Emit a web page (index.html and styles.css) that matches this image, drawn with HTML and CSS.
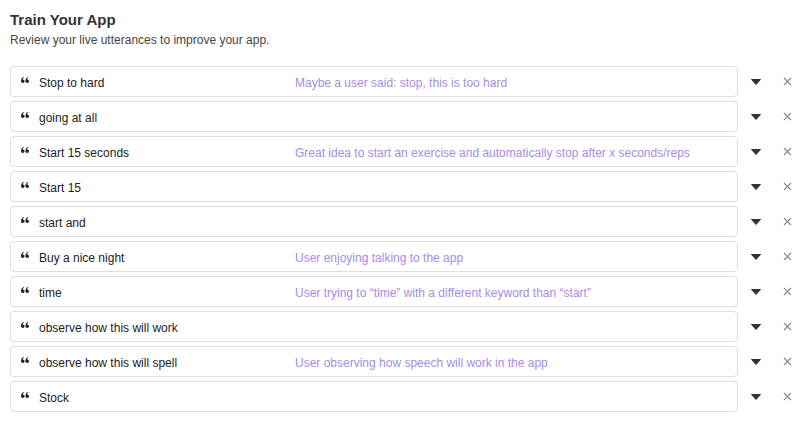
FILE: index.html
```html
<!DOCTYPE html>
<html lang="en">
  <head>
    <meta charset="UTF-8" />
    <title>Train Your App</title>
    <link rel="stylesheet" href="styles.css">
  </head>
  <body>
    <div class="container">
      <h1>Train Your App</h1>
      <p class="subtitle">Review your live utterances to improve your app.</p>
      <div class="list" id="list"></div>
    </div>

    <script>
      const items = [
        ["Stop to hard", "Maybe a user said: stop, this is too hard"],
        ["going at all", ""],
        ["Start 15 seconds", "Great idea to start an exercise and automatically stop after x seconds/reps"],
        ["Start 15", ""],
        ["start and", ""],
        ["Buy a nice night", "User enjoying talking to the app"],
        ["time", "User trying to \u201ctime\u201d with a different keyword than \u201cstart\u201d"],
        ["observe how this will work", ""],
        ["observe how this will spell", "User observing how speech will work in the app"],
        ["Stock", ""]
      ];

      // quote-left glyph: two filled "6" shapes
      const quote = `<svg width="8" height="6" viewBox="0 0 8 6">
        <path d="M0 4.2a1.8 1.8 0 1 0 1.8-1.8c0-1 .5-1.6 1.3-1.9L2.9 0C1 .5 0 2 0 4.2z" fill="#222"/>
        <path d="M4.4 4.2a1.8 1.8 0 1 0 1.8-1.8c0-1 .5-1.6 1.3-1.9L7.3 0C5.4 .5 4.4 2 4.4 4.2z" fill="#222"/>
      </svg>`;

      const list = document.getElementById("list");
      items.forEach(([text, note]) => {
        const row = document.createElement("div");
        row.className = "row";
        row.innerHTML = `
          <div class="utterance">
            <span class="quote">${quote}</span>
            <span class="text">${text}</span>
            <span class="note">${note}</span>
          </div>
          <span class="caret"><svg width="10" height="6" viewBox="0 0 10 6"><path d="M0.5 0.5h9L5 5.5z" fill="#333" stroke="#333" stroke-linejoin="round"/></svg></span>
          <span class="close"><svg width="9" height="9" viewBox="0 0 9 9"><path d="M1 1l7 7M8 1L1 8" stroke="#888" stroke-width="1.1"/></svg></span>
        `;
        list.appendChild(row);
      });
    </script>
  </body>
</html>
```

FILE: styles.css
```css
body {
  font-family: "Liberation Sans", Arial, sans-serif;
  margin: 0;
  padding: 0;
  background-color: #fff;
  color: #222;
}
.container {
  padding: 10px 10px 0 10px;
}
h1 {
  margin: 0;
  font-size: 15px;
  font-weight: bold;
  color: #333;
  line-height: 20px;
}
.subtitle {
  margin: 2px 0 0 0;
  font-size: 12px;
  color: #444;
  line-height: 16px;
}
.list {
  margin-top: 18px;
  display: flex;
  flex-direction: column;
  gap: 4px;
}
.row {
  display: flex;
  align-items: center;
}
.utterance {
  width: 728px;
  height: 31px;
  box-sizing: border-box;
  border: 1px solid #dedede;
  border-radius: 4px;
  display: flex;
  align-items: center;
  padding: 2px 0 0 10px;
  font-size: 12px;
}
.quote {
  width: 18px;
  display: flex;
  align-items: center;
  margin-top: -5px;
}
.text {
  width: 256px;
  color: #222;
}
.note {
  color: #a68bec;
  font-size: 12px;
}
.caret {
  width: 12px;
  margin-left: 13px;
  display: flex;
  align-items: center;
}
.close {
  margin-left: 20px;
  display: flex;
  align-items: center;
}
```
